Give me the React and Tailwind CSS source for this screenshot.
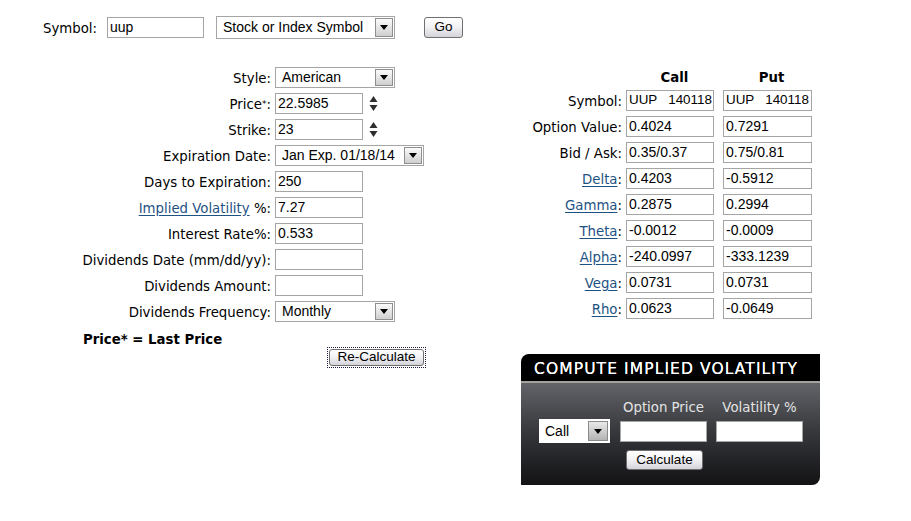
const arial = "font-['Liberation_Sans',Arial,sans-serif]";

function DropArrow({ className = "" }) {
  return (
    <span
      className={`flex items-center justify-center border border-[#8e8e8e] bg-linear-to-b from-[#fbfbfb] to-[#cfcfcf] ${className}`}
    >
      <svg width="8" height="5" viewBox="0 0 8 5">
        <path d="M0 0h8L4 5z" fill="#000" />
      </svg>
    </span>
  );
}

function Select({ value, w, h = "h-[21px]" }) {
  return (
    <div className={`${w} ${h} flex items-stretch border border-[#a5a5a5] bg-white p-[1px]`}>
      <span className={`flex flex-1 items-center pl-[5px] text-[14px] ${arial}`}>{value}</span>
      <DropArrow className="w-[18px]" />
    </div>
  );
}

function Field({ value = "", w = "w-[88px]", size = "text-[14px]" }) {
  return (
    <div
      className={`${w} ${size} h-[21px] flex items-center overflow-hidden whitespace-pre border border-[#a5a5a5] bg-white pl-[2px] text-black ${arial}`}
    >
      {value}
    </div>
  );
}

function Spinner() {
  return (
    <svg className="ml-[6px]" width="9" height="16" viewBox="0 0 9 16">
      <path d="M4.5 0L8.5 6H0.5z" fill="#2e2e2e" />
      <path d="M0.5 9h8L4.5 15z" fill="#2e2e2e" />
    </svg>
  );
}

function Link({ children }) {
  return <span className="text-[#1e5283] underline underline-offset-2">{children}</span>;
}

function Button({ children, className = "" }) {
  return (
    <div
      className={`flex items-center justify-center rounded-[3px] border border-[#6f6f6f] bg-linear-to-b from-white via-[#f1f1f4] to-[#d3d3da] text-[13.5px] text-black ${arial} ${className}`}
    >
      {children}
    </div>
  );
}

const leftRows = [
  ["Style:", <Select w="w-[120px]" value="American" />],
  [
    <>
      Price<sup className="relative top-[-2px] text-[9px]">*</sup>:
    </>,
    <div className="flex items-center">
      <Field value="22.5985" />
      <Spinner />
    </div>,
  ],
  [
    "Strike:",
    <div className="flex items-center">
      <Field value="23" />
      <Spinner />
    </div>,
  ],
  ["Expiration Date:", <Select w="w-[149px]" value="Jan Exp. 01/18/14" />],
  ["Days to Expiration:", <Field value="250" />],
  [
    <>
      <Link>Implied Volatility</Link>
      {" %:"}
    </>,
    <Field value="7.27" />,
  ],
  ["Interest Rate%:", <Field value="0.533" />],
  ["Dividends Date (mm/dd/yy):", <Field />],
  ["Dividends Amount:", <Field />],
  ["Dividends Frequency:", <Select w="w-[120px]" value="Monthly" />],
];

const rightRows = [
  ["Symbol:", "UUP   140118", "UUP   140118"],
  ["Option Value:", "0.4024", "0.7291"],
  ["Bid / Ask:", "0.35/0.37", "0.75/0.81"],
  [<><Link>Delta</Link>:</>, "0.4203", "-0.5912"],
  [<><Link>Gamma</Link>:</>, "0.2875", "0.2994"],
  [<><Link>Theta</Link>:</>, "-0.0012", "-0.0009"],
  [<><Link>Alpha</Link>:</>, "-240.0997", "-333.1239"],
  [<><Link>Vega</Link>:</>, "0.0731", "0.0731"],
  [<><Link>Rho</Link>:</>, "0.0623", "-0.0649"],
];

export default function App() {
  return (
    <div className="relative h-[521px] w-[911px] overflow-hidden bg-white text-[13.3px] text-black font-['DejaVu_Sans',Verdana,sans-serif]">
      {/* symbol lookup */}
      <div className="flex h-[39px] items-center pl-[43px] pt-[16px]">
        <span className="w-[64px] pt-[3px]">Symbol:</span>
        <Field value="uup" w="w-[97px]" />
        <div className="ml-[12px]">
          <Select w="w-[179px]" h="h-[23px]" value="Stock or Index Symbol" />
        </div>
        <Button className="ml-[29px] h-[21px] w-[39px]">Go</Button>
      </div>

      <div className="mt-[28px] flex">
        {/* inputs */}
        <div className="ml-[83px] w-[427px]">
          <div className="grid grid-cols-[188px_auto] gap-x-[4px] gap-y-[5px]">
            {leftRows.map(([label, control], i) => (
              <div key={i} className="contents">
                <div className="flex h-[21px] items-center justify-end whitespace-nowrap pt-[2px]">
                  <span>{label}</span>
                </div>
                <div className="flex h-[21px] items-center">{control}</div>
              </div>
            ))}
          </div>
          <div className="mt-[10px] font-bold leading-[15px]">Price* = Last Price</div>
          <div className="ml-[244px] w-[99px] border border-dotted border-[#1a1a40] p-[1px]">
            <Button className="h-[17px] rounded-[2px]">Re-Calculate</Button>
          </div>
        </div>

        {/* results */}
        <div>
          <div className="flex h-[23px] items-start pt-[1px] font-bold">
            <span className="w-[116px]" />
            <span className="w-[97px] text-center">Call</span>
            <span className="w-[97px] text-center">Put</span>
          </div>
          <div className="flex flex-col gap-[5px]">
            {rightRows.map(([label, call, put], i) => (
              <div key={i} className="flex h-[21px] items-center">
                <span className="mr-[4px] w-[112px] whitespace-nowrap pt-[2px] text-right">{label}</span>
                <Field value={call} size={i === 0 ? "text-[13.4px]" : "text-[14px]"} />
                <div className="ml-[9px]">
                  <Field value={put} w="w-[89px]" size={i === 0 ? "text-[13.4px]" : "text-[14px]"} />
                </div>
              </div>
            ))}
          </div>

          <div className="ml-[11px] mt-[35px] h-[131px] w-[299px] overflow-hidden rounded-tl-[8px] rounded-br-[8px]">
            <div className="flex h-[29px] items-center border-b-2 border-[#a3a39c] bg-black pl-[13px] pt-[5px] text-[15.5px] tracking-[1.1px] text-white [text-shadow:0_0_0.4px_#fff]">
              COMPUTE IMPLIED VOLATILITY
            </div>
            <div className="h-[102px] bg-linear-to-b from-[#626469] via-[#34363a] to-[#131315] pl-[18px] pt-[17px]">
              <div className="flex h-[16px] items-center leading-[16px] text-[#e4e4e4]">
                <span className="w-[81px]" />
                <span className="w-[87px] text-center">Option Price</span>
                <span className="ml-[9px] w-[87px] text-center">Volatility %</span>
              </div>
              <div className="mt-[3px] flex h-[24px] items-center">
                <div className={`flex h-[24px] w-[71px] items-stretch bg-white p-[2px] text-[14px] ${arial}`}>
                  <span className="flex flex-1 items-center pl-[4px]">Call</span>
                  <span className="flex w-[20px] items-center justify-center border border-[#8a8a8a] bg-linear-to-b from-[#e9e9e9] to-[#b4b4b4]">
                    <svg width="8" height="5" viewBox="0 0 8 5">
                      <path d="M0 0h8L4 5z" fill="#000" />
                    </svg>
                  </span>
                </div>
                <div className="ml-[10px]">
                  <Field w="w-[87px]" />
                </div>
                <div className="ml-[9px]">
                  <Field w="w-[87px]" />
                </div>
              </div>
              <Button className="ml-[87px] mt-[7px] h-[20px] w-[77px] rounded-[2px]">Calculate</Button>
            </div>
          </div>
        </div>
      </div>
    </div>
  );
}
